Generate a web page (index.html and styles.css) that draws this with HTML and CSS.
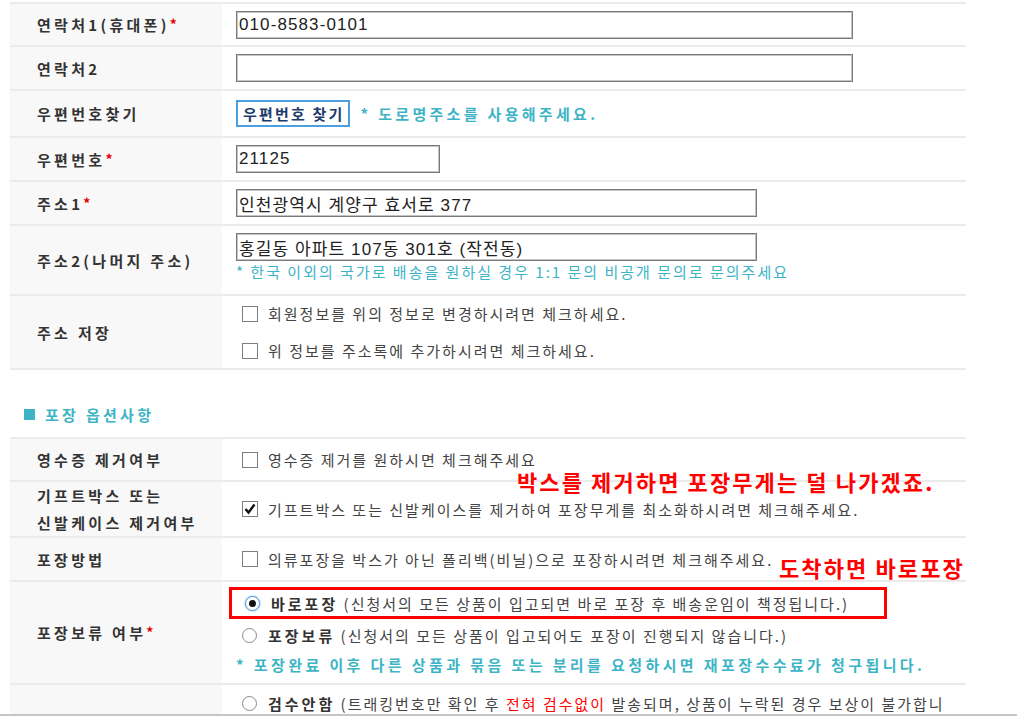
FILE: index.html
```html
<!DOCTYPE html>
<html>
<head lang="ko">
    <meta charset="UTF-8">
    <title>주문서 작성</title>
    <link rel="stylesheet" href="styles.css">
</head>
<body>
<div class="page">
    <div class="form-table">
        <div class="row">
            <div class="label">연락처1(휴대폰)<em>*</em></div>
            <div class="field"><input type="text" class="text long" value="010-8583-0101"></div>
        </div>
        <div class="row">
            <div class="label">연락처2</div>
            <div class="field"><input type="text" class="text long" value=""></div>
        </div>
        <div class="row row-btn">
            <div class="label">우편번호찾기</div>
            <div class="field field-line">
                <a class="btn-zip">우편번호 찾기</a>
                <span class="tip">* 도로명주소를 사용해주세요.</span>
            </div>
        </div>
        <div class="row">
            <div class="label">우편번호<em>*</em></div>
            <div class="field"><input type="text" class="text zip" value="21125"></div>
        </div>
        <div class="row">
            <div class="label">주소1<em>*</em></div>
            <div class="field"><input type="text" class="text addr" value="인천광역시 계양구 효서로 377"></div>
        </div>
        <div class="row row-addr">
            <div class="label">주소2(나머지 주소)</div>
            <div class="field field-top">
                <input type="text" class="text addr" value="홍길동 아파트 107동 301호 (작전동)">
                <p class="note">* 한국 이외의 국가로 배송을 원하실 경우 1:1 문의 비공개 문의로 문의주세요</p>
            </div>
        </div>
        <div class="row row-save">
            <div class="label">주소 저장</div>
            <div class="field">
                <label class="check"><span class="box"></span>회원정보를 위의 정보로 변경하시려면 체크하세요.</label>
                <label class="check"><span class="box"></span>위 정보를 주소록에 추가하시려면 체크하세요.</label>
            </div>
        </div>
    </div>

    <h3 class="section-title"><span class="mark"></span>포장 옵션사항</h3>

    <div class="form-table">
        <div class="row">
            <div class="label">영수증 제거여부</div>
            <div class="field">
                <label class="check"><span class="box"></span>영수증 제거를 원하시면 체크해주세요</label>
            </div>
        </div>
        <div class="row row-2line">
            <div class="label">기프트박스 또는<br>신발케이스 제거여부</div>
            <div class="field">
                <label class="check">
                    <span class="box"><svg width="14" height="14" viewBox="0 0 14 14"><path d="M2.5 7 L5.5 10.5 L11.5 2.5" fill="none" stroke="#111" stroke-width="2.4"/></svg></span>기프트박스 또는 신발케이스를 제거하여 포장무게를 최소화하시려면 체크해주세요.
                </label>
            </div>
        </div>
        <div class="row">
            <div class="label">포장방법</div>
            <div class="field">
                <label class="check"><span class="box"></span>의류포장을 박스가 아닌 폴리백(비닐)으로 포장하시려면 체크해주세요.</label>
            </div>
        </div>
        <div class="row row-radio">
            <div class="label">포장보류 여부<em>*</em></div>
            <div class="field">
                <label class="check radio-line marked"><span class="radio on"></span><b>바로포장</b>&nbsp;(신청서의 모든 상품이 입고되면 바로 포장 후 배송운임이 책정됩니다.)</label>
                <label class="check radio-line"><span class="radio"></span><b>포장보류</b>&nbsp;(신청서의 모든 상품이 입고되어도 포장이 진행되지 않습니다.)</label>
                <p class="tip tip-line">* 포장완료 이후 다른 상품과 묶음 또는 분리를 요청하시면 재포장수수료가 청구됩니다.</p>
            </div>
        </div>
        <div class="row row-last">
            <div class="label"></div>
            <div class="field field-top">
                <label class="radio-text"><span class="radio"></span><b>검수안함</b> (트래킹번호만 확인 후 <span class="red">전혀 검수없이</span> 발송되며, 상품이 누락된 경우 보상이 불가합니</label>
            </div>
        </div>
    </div>

    <p class="memo memo-box">박스를 제거하면 포장무게는 덜 나가겠죠.</p>
    <p class="memo memo-pack">도착하면 바로포장</p>
</div>
</body>
</html>
```

FILE: styles.css
```css
* {
    margin: 0;
    padding: 0;
    box-sizing: border-box;
}

body {
    background: #fff;
    font-family: "Noto Sans CJK KR", "Liberation Sans", sans-serif;
    font-size: 15px;
    color: #444;
}

.page {
    position: relative;
    height: 716px;
    overflow: hidden;
    padding: 2px 0 0 10px;
    border-bottom: 2px solid #c6c6c6;
}

.form-table {
    width: 956px;
    border-bottom: 2px solid #ebebeb;
}

.row {
    display: flex;
    min-height: 44px;
    border-top: 2px solid #ebebeb;
}

.row:first-child {
    min-height: 43px;
}

.row-btn {
    min-height: 47px;
}

.row-addr {
    min-height: 70px;
}

.row-save {
    min-height: 74px;
}

.row-2line {
    min-height: 55px;
}

.row-radio {
    min-height: 103px;
}

.row-last {
    min-height: 30px;
}

.label {
    display: flex;
    align-items: center;
    width: 212px;
    flex-shrink: 0;
    padding-left: 27px;
    background: #f8f8f8;
    font-weight: bold;
    font-size: 15px;
    line-height: 27px;
    letter-spacing: 3.3px;
    color: #333;
}

.label em {
    font-style: normal;
    color: #e60000;
    font-size: 14px;
    letter-spacing: 0;
}

.field {
    flex: 1;
    display: flex;
    flex-direction: column;
    justify-content: center;
    padding-left: 14px;
}

.field-line {
    flex-direction: row;
    align-items: center;
    justify-content: flex-start;
}

.field-top {
    justify-content: flex-start;
    padding-top: 7px;
}

.row-last .field-top {
    padding-top: 4px;
}

.text {
    display: block;
    height: 28px;
    padding: 0 2px;
    border: 1px solid #7a7a7a;
    box-shadow: inset 0 0 0 1px #c4c4c4;
    font-family: "Liberation Sans", "Noto Sans CJK KR", sans-serif;
    font-size: 17px;
    letter-spacing: 1.1px;
    color: #222;
    outline: none;
}

.long {
    width: 617px;
}

.zip {
    width: 204px;
}

.addr {
    width: 521px;
}

.btn-zip {
    display: inline-block;
    height: 27px;
    line-height: 23px;
    padding: 0 3px 0 5px;
    border: 2px solid #4aa0de;
    font-weight: bold;
    font-size: 15px;
    letter-spacing: 2.2px;
    color: #1d3c6c;
    cursor: pointer;
}

.tip {
    margin-left: 11px;
    font-weight: bold;
    font-size: 15px;
    letter-spacing: 3.3px;
    color: #3db4c6;
}

.tip-line {
    margin-left: 0;
    line-height: 27px;
    letter-spacing: 3.4px;
}

.note {
    margin-top: 1px;
    line-height: 20px;
    font-size: 15px;
    letter-spacing: 2px;
    color: #3db4c6;
}

.check {
    display: flex;
    align-items: center;
    height: 30px;
    letter-spacing: 2px;
    white-space: nowrap;
}

.row-save .check + .check {
    margin-top: 7px;
}

.box {
    display: flex;
    align-items: center;
    justify-content: center;
    width: 16px;
    height: 16px;
    margin: 0 10px 0 6px;
    border: 1px solid #7d7d7d;
    background: #fff;
    flex-shrink: 0;
}

.radio {
    position: relative;
    width: 15px;
    height: 15px;
    margin: 0 11px 0 6px;
    border: 1px solid #8a8a8a;
    border-radius: 50%;
    background: #fff;
    flex-shrink: 0;
}

.radio.on {
    border-color: #4d97d6;
    box-shadow: 0 0 0 1px #cfe6f8;
}

.radio.on:after {
    content: "";
    position: absolute;
    left: 3px;
    top: 3px;
    width: 7px;
    height: 7px;
    border-radius: 50%;
    background: #111;
}

.radio-line {
    height: 32px;
}

.radio-line b,
.radio-text b {
    letter-spacing: 3px;
    color: #333;
}

.marked {
    width: 658px;
    margin-left: -7px;
    padding-left: 7px;
    border: 3px solid #f00;
}

.radio-text {
    display: block;
    height: 30px;
    line-height: 30px;
    letter-spacing: 2px;
    white-space: nowrap;
}

.radio-text .radio {
    display: inline-block;
    vertical-align: middle;
    margin-top: -4px;
}

.red {
    color: #f00;
}

.section-title {
    display: flex;
    align-items: center;
    height: 67px;
    padding: 22px 0 0 14px;
    font-size: 15px;
    letter-spacing: 3.3px;
    color: #3db4c6;
}

.mark {
    width: 11px;
    height: 11px;
    margin-right: 10px;
    background: #3db4c6;
}

.memo {
    position: absolute;
    font-weight: bold;
    font-size: 22px;
    line-height: 26px;
    color: #f00;
    white-space: nowrap;
}

.memo-box {
    left: 517px;
    top: 468px;
    letter-spacing: 2.1px;
}

.memo-pack {
    left: 779px;
    top: 554px;
    letter-spacing: 2.1px;
}
```
